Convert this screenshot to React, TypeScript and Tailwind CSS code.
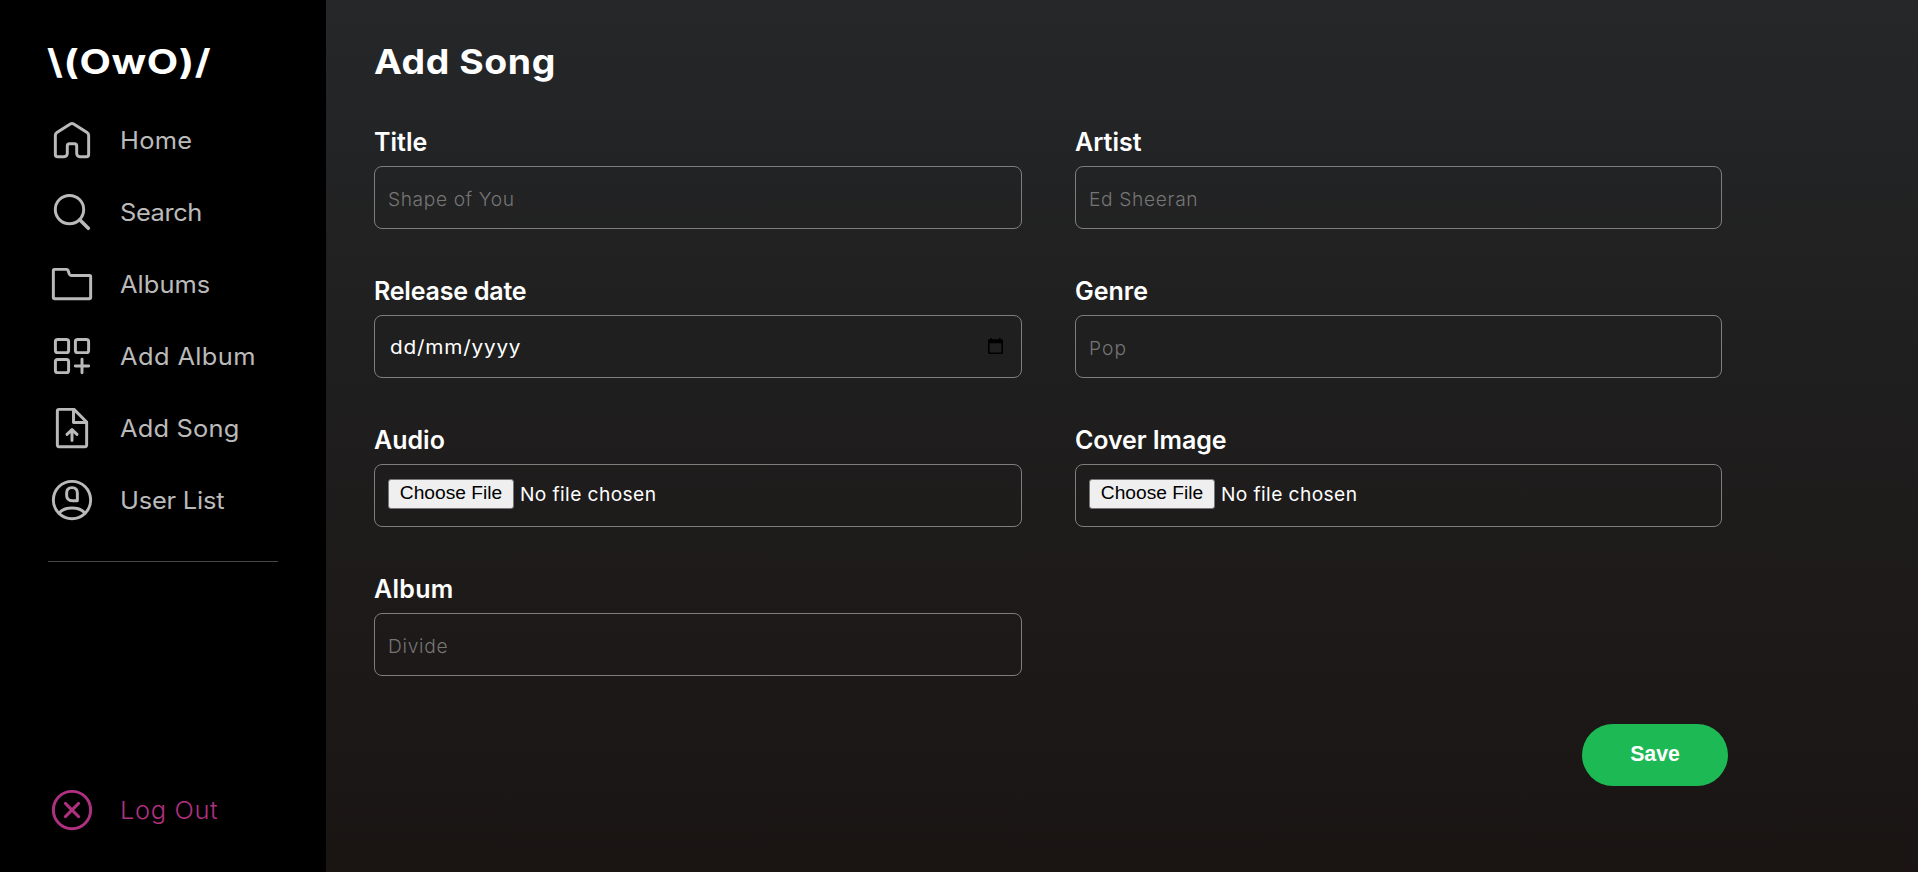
import type { ReactNode } from "react";

type NavEntry = { label: string; tracking: string; icon: ReactNode };

function Icon({ children }: { children: ReactNode }) {
  return (
    <svg
      className="h-12 w-12 shrink-0"
      viewBox="0 0 48 48"
      fill="none"
      stroke="currentColor"
      strokeWidth={2.95}
      strokeLinecap="round"
      strokeLinejoin="round"
    >
      {children}
    </svg>
  );
}

const NAV: NavEntry[] = [
  {
    label: "Home",
    tracking: "tracking-[0.26px]",
    icon: (
      <Icon>
        <path d="M22.3 7.9 8.9 16.6Q7.35 17.6 7.35 19.3V38.4Q7.35 40.65 9.6 40.65H16Q19.3 40.65 19.3 37.3V30Q19.3 27.7 21.6 27.7H26.4Q28.7 27.7 28.7 30V37.3Q28.7 40.65 32 40.65H38.4Q40.65 40.65 40.65 38.4V19.3Q40.65 17.6 39.1 16.6L25.7 7.9Q24 6.9 22.3 7.9Z" />
      </Icon>
    ),
  },
  {
    label: "Search",
    tracking: "tracking-[-0.4px]",
    icon: (
      <Icon>
        <circle cx="21.5" cy="21.6" r="14.2" />
        <path d="M32 32 40.3 40.3" strokeWidth={3.6} />
      </Icon>
    ),
  },
  {
    label: "Albums",
    tracking: "tracking-[0.03px]",
    icon: (
      <Icon>
        <path d="M6.4 9.35H18.4Q19.6 9.35 20 10.4L21.4 14.2Q21.9 15.4 23.2 15.4H41.6Q42.65 15.4 42.65 16.5V37.6Q42.65 38.65 41.6 38.65H6.4Q5.35 38.65 5.35 37.6V10.4Q5.35 9.35 6.4 9.35Z" />
      </Icon>
    ),
  },
  {
    label: "Add Album",
    tracking: "tracking-[0.36px]",
    icon: (
      <Icon>
        <rect x="7.4" y="7.4" width="13.2" height="13.2" rx="2.2" />
        <rect x="27.4" y="7.4" width="13.2" height="13.2" rx="2.2" />
        <rect x="7.4" y="27.4" width="13.2" height="13.2" rx="2.2" />
        <path d="M34 27.3V40.7M27.3 34H40.7" />
      </Icon>
    ),
  },
  {
    label: "Add Song",
    tracking: "tracking-[0.16px]",
    icon: (
      <Icon>
        <path d="M26 5.35H11Q9.35 5.35 9.35 7V41Q9.35 42.65 11 42.65H37Q38.65 42.65 38.65 41V18Z" />
        <path d="M25.5 5.35V18.5H38.65" />
        <path d="M24 26V36.6M19 30.4 24 25.6 29 30.4" />
      </Icon>
    ),
  },
  {
    label: "User List",
    tracking: "tracking-[-0.2px]",
    icon: (
      <Icon>
        <circle cx="24" cy="24" r="18.65" />
        <path d="M18.65 17Q18.65 11.6 24 11.6Q29.35 11.6 29.35 17V24.65H24.5Q18.65 24.65 18.65 19.5Z" />
        <path d="M11.2 37.2Q15 32 24 32Q33 32 36.8 37.2" />
      </Icon>
    ),
  },
];

function NavItem({ label, tracking, icon }: NavEntry) {
  return (
    <a href="#" className="flex h-12 items-center gap-6">
      {icon}
      <span className={"origin-left scale-x-[1.06] whitespace-nowrap pt-0.5 text-[24px] leading-8 " + tracking}>{label}</span>
    </a>
  );
}

function Field({ label, tracking = "", children }: { label: string; tracking?: string; children: ReactNode }) {
  return (
    <div className="flex flex-col gap-[9px]">
      <div className={"text-[25px] font-semibold leading-[30px] text-white " + tracking}>{label}</div>
      <div className="flex h-[63px] items-center rounded-lg border border-[#7e7e7e] px-[13px] text-[19.2px] text-white">
        {children}
      </div>
    </div>
  );
}

function TextInput({ placeholder, tracking }: { placeholder: string; tracking: string }) {
  return (
    <input
      type="text"
      placeholder={placeholder}
      className={"w-full bg-transparent pt-0.5 font-light leading-7 outline-none placeholder:text-[#757575] " + tracking}
    />
  );
}

function FileInput() {
  return (
    <div className="mb-[3px] flex items-center gap-[7px]">
      <button className="h-[30px] w-[126px] rounded-[3px] border border-[#767676] bg-[#efefef] pb-0.5 font-['Liberation_Sans',sans-serif] text-[19.2px] leading-none text-black">
        Choose File
      </button>
      <span className="-ml-px whitespace-nowrap tracking-[0.4px]">No file chosen</span>
    </div>
  );
}

export default function App() {
  return (
    <div className="flex h-[872px] w-full overflow-hidden bg-black font-['Inter',sans-serif]">
      <aside className="flex w-[326px] shrink-0 flex-col bg-black px-12 pb-[38px] pt-[42px] text-[#bababa]">
        <div className="-ml-px origin-left scale-x-[1.2] whitespace-nowrap text-[34px] font-bold leading-10 tracking-[0.5px] text-white">
          {"\\(OwO)/"}
        </div>
        <nav className="mt-[34px] flex flex-col gap-6">
          {NAV.map((item) => (
            <NavItem key={item.label} {...item} />
          ))}
        </nav>
        <hr className="mt-[37px] w-[230px] border-[#464646]" />
        <div className="mt-auto text-[#b03080]">
          <NavItem
            label="Log Out"
            tracking="font-light tracking-[0.6px]"
            icon={
              <Icon>
                <circle cx="24" cy="24" r="18.65" />
                <path d="M17.4 17.4 30.6 30.6M30.6 17.4 17.4 30.6" />
              </Icon>
            }
          />
        </div>
      </aside>
      <main className="flex-1 bg-linear-to-b from-[#252729] via-[#1f1e1e] via-45% to-[#1a1513] pl-12 pt-[42px]">
        <h1 className="origin-left scale-x-[1.1] text-[34px] font-bold leading-10 tracking-[0.5px] text-white">Add Song</h1>
        <form className="mt-[45px] w-[1354px]">
          <div className="grid grid-cols-[648px_647px] gap-x-[53px] gap-y-[47px]">
            <Field label="Title">
              <TextInput placeholder="Shape of You" tracking="tracking-[0.6px]" />
            </Field>
            <Field label="Artist">
              <TextInput placeholder="Ed Sheeran" tracking="tracking-[0.65px]" />
            </Field>
            <Field label="Release date" tracking="tracking-[-0.2px]">
              <div className="flex w-full items-center justify-between pl-0.5 pr-[5px]">
                <span className="origin-left scale-x-[1.08] pt-0.5 tracking-[0.75px]">dd/mm/yyyy</span>
                <svg className="h-4 w-[15px]" viewBox="0 0 15 16" fill="black">
                  <path
                    fillRule="evenodd"
                    d="M2.5 0H4V1.3H11V0H12.5V1.3H13.7Q15 1.3 15 2.6V14.7Q15 16 13.7 16H1.3Q0 16 0 14.7V2.6Q0 1.3 1.3 1.3H2.5ZM1.6 5.2V14.4H13.4V5.2Z"
                  />
                </svg>
              </div>
            </Field>
            <Field label="Genre">
              <TextInput placeholder="Pop" tracking="tracking-[1.1px]" />
            </Field>
            <Field label="Audio">
              <FileInput />
            </Field>
            <Field label="Cover Image" tracking="tracking-[-0.1px]">
              <FileInput />
            </Field>
            <Field label="Album" tracking="tracking-[0.3px]">
              <TextInput placeholder="Divide" tracking="tracking-[0.7px]" />
            </Field>
          </div>
          <div className="mt-12 flex justify-end">
            <button className="h-[62px] w-[146px] rounded-full bg-[#1db954] font-['Liberation_Sans',sans-serif] text-[21.3px] font-bold text-white">
              Save
            </button>
          </div>
        </form>
      </main>
    </div>
  );
}
